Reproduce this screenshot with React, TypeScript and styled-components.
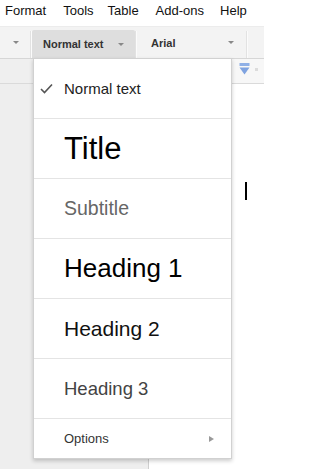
import React from "react";
import styled, { createGlobalStyle } from "styled-components";

const GlobalStyle = createGlobalStyle`
  html, body { margin: 0; padding: 0; }
  body {
    width: 264px;
    height: 469px;
    overflow: hidden;
    font-family: "Liberation Sans", Arial, sans-serif;
    background: #ffffff;
  }
  #root { width: 264px; height: 469px; }
`;

const Screen = styled.div`
  width: 264px;
  height: 469px;
  display: flex;
  flex-direction: column;
  overflow: hidden;
`;

const MenuBar = styled.div`
  height: 26px;
  flex: none;
  display: flex;
  align-items: flex-start;
  padding-top: 3px;
  box-sizing: border-box;
  margin-left: -2px;
  background: #fff;
`;

const MenuItem = styled.span<{ $pl?: number }>`
  font-size: 13px;
  line-height: 16px;
  color: #111;
  padding: 0 7px 0 ${(p) => p.$pl ?? 7}px;
  white-space: nowrap;
`;

const Toolbar = styled.div`
  height: 32px;
  flex: none;
  display: flex;
  align-items: stretch;
  background: #f3f3f3;
  border-top: 1px solid #ececec;
  box-sizing: border-box;
`;

const Segment = styled.div<{ $w: number; $active?: boolean }>`
  width: ${(p) => p.$w}px;
  flex: none;
  display: flex;
  align-items: center;
  box-sizing: border-box;
  margin-top: ${(p) => (p.$active ? 3 : 0)}px;
  background: ${(p) => (p.$active ? "#dedede" : "transparent")};
  border-radius: ${(p) => (p.$active ? "2px 2px 0 0" : "0")};
`;

const SegLabel = styled.span<{ $pl: number }>`
  padding-left: ${(p) => p.$pl}px;
  font-size: 11px;
  font-weight: bold;
  color: #333;
  flex: 1;
  white-space: nowrap;
`;

const Caret = styled.span<{ $mr: number }>`
  width: 0;
  height: 0;
  border-left: 3px solid transparent;
  border-right: 3px solid transparent;
  border-top: 3px solid #888;
  margin-right: ${(p) => p.$mr}px;
`;

const Sep = styled.div`
  width: 2px;
  flex: none;
  margin: 4px 0 0;
  border-left: 1px solid #e2e2e2;
  border-right: 1px solid #fbfbfb;
  box-sizing: border-box;
`;

const Workspace = styled.div`
  flex: 1;
  position: relative;
  display: flex;
  flex-direction: column;
  background: #eeeeee;
`;

const Ruler = styled.div`
  height: 26px;
  flex: none;
  display: flex;
  border-top: 1px solid #d6d6d6;
  border-bottom: 1px solid #dadada;
  box-sizing: border-box;
`;

const RulerGutter = styled.div`
  width: 149px;
  flex: none;
  background: #efefef;
`;

const RulerTrack = styled.div`
  flex: 1;
  background: #f7f7f7;
  display: flex;
  align-items: flex-start;
  padding: 4px 0 0 90px;
  gap: 5px;
`;

const Body = styled.div`
  flex: 1;
  display: flex;
`;

const Gutter = styled.div`
  width: 148px;
  flex: none;
  background: #eeeeee;
  border-right: 1px solid #cfcfcf;
`;

const Page = styled.div`
  flex: 1;
  background: #fff;
  padding: 98px 0 0 96px;
`;

const TextCaret = styled.div`
  width: 2px;
  height: 18px;
  background: #000;
`;

const Dropdown = styled.div`
  position: absolute;
  top: 0;
  left: 33px;
  width: 199px;
  background: #fff;
  border: 1px solid rgba(0, 0, 0, 0.18);
  box-shadow: 0 2px 4px rgba(0, 0, 0, 0.2);
  box-sizing: border-box;
  display: flex;
  flex-direction: column;
`;

const Row = styled.div<{ $h: number; $last?: boolean }>`
  height: ${(p) => p.$h}px;
  box-sizing: border-box;
  display: grid;
  grid-template-columns: 24px 1fr 22px;
  align-items: center;
  padding-left: 6px;
  border-bottom: ${(p) => (p.$last ? "none" : "1px solid #e4e4e4")};
`;

const RowText = styled.span<{ $size: number; $color: string }>`
  grid-column: 2;
  font-size: ${(p) => p.$size}px;
  color: ${(p) => p.$color};
  white-space: nowrap;
`;

const CheckCell = styled.span`
  grid-column: 1;
  display: flex;
  align-items: center;
`;

const SubArrow = styled.span`
  grid-column: 3;
  width: 0;
  height: 0;
  border-top: 3px solid transparent;
  border-bottom: 3px solid transparent;
  border-left: 5px solid #999;
`;

const styles = [
  { label: "Title", size: 31, color: "#000" },
  { label: "Subtitle", size: 19.5, color: "#666" },
  { label: "Heading 1", size: 26, color: "#000" },
  { label: "Heading 2", size: 21, color: "#111" },
  { label: "Heading 3", size: 18.5, color: "#434343" },
];

export default function App() {
  return (
    <>
      <GlobalStyle />
      <Screen>
        <MenuBar>
          <MenuItem>Format</MenuItem>
          <MenuItem $pl={10}>Tools</MenuItem>
          <MenuItem>Table</MenuItem>
          <MenuItem $pl={10}>Add-ons</MenuItem>
          <MenuItem $pl={9}>Help</MenuItem>
        </MenuBar>
        <Toolbar>
          <Segment $w={30}>
            <SegLabel $pl={0} />
            <Caret $mr={11} />
          </Segment>
          <Sep />
          <Segment $w={103} $active>
            <SegLabel $pl={11}>Normal text</SegLabel>
            <Caret $mr={11} />
          </Segment>
          <Sep />
          <Segment $w={109}>
            <SegLabel $pl={14}>Arial</SegLabel>
            <Caret $mr={12} />
          </Segment>
          <Sep />
        </Toolbar>
        <Workspace>
          <Ruler>
            <RulerGutter />
            <RulerTrack>
              <svg width="11" height="13" viewBox="0 0 11 13">
                <rect x="0.5" y="0" width="10" height="3" fill="#8fb0e6" />
                <path d="M0.5 4.5 H10.5 L5.5 11.5 Z" fill="#7fa3e0" />
              </svg>
              <svg width="4" height="13" viewBox="0 0 4 13">
                <rect x="0" y="5" width="3" height="3" fill="#dcdcdc" />
              </svg>
            </RulerTrack>
          </Ruler>
          <Body>
            <Gutter />
            <Page>
              <TextCaret />
            </Page>
          </Body>
          <Dropdown>
            <Row $h={60}>
              <CheckCell>
                <svg width="13" height="11" viewBox="0 0 13 11">
                  <path
                    d="M1 6 L4.5 9.5 L12 1.5"
                    fill="none"
                    stroke="#555"
                    strokeWidth="1.6"
                  />
                </svg>
              </CheckCell>
              <RowText $size={15} $color="#222">
                Normal text
              </RowText>
            </Row>
            {styles.map((s) => (
              <Row key={s.label} $h={60}>
                <RowText $size={s.size} $color={s.color}>
                  {s.label}
                </RowText>
              </Row>
            ))}
            <Row $h={39} $last>
              <RowText $size={13} $color="#333">
                Options
              </RowText>
              <SubArrow />
            </Row>
          </Dropdown>
        </Workspace>
      </Screen>
    </>
  );
}
